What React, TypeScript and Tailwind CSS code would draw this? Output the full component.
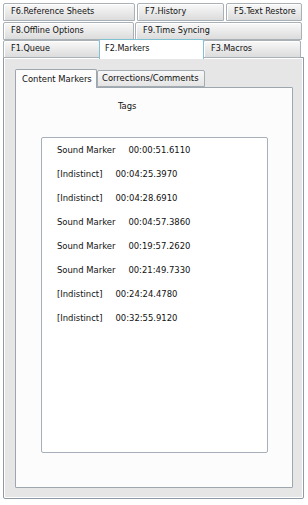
import React from "react";

const font = { fontFamily: '"DejaVu Sans Condensed", "DejaVu Sans", sans-serif' };

function Tab({ w, label, cls = "" }: { w: string; label: string; cls?: string }) {
  return (
    <div
      className={`${w} ${cls} h-[18px] shrink-0 flex items-center pl-[7px] border border-[#a9b0b6] rounded-t-[2px] bg-gradient-to-b from-[#f9f9f9] to-[#dcdcdc] shadow-[inset_1px_1px_0_#ffffff] text-[9px] text-[#111] whitespace-nowrap overflow-hidden`}
    >
      {label}
    </div>
  );
}

const items: [string, string][] = [
  ["Sound Marker", "00:00:51.6110"],
  ["[Indistinct]", "00:04:25.3970"],
  ["[Indistinct]", "00:04:28.6910"],
  ["Sound Marker", "00:04:57.3860"],
  ["Sound Marker", "00:19:57.2620"],
  ["Sound Marker", "00:21:49.7330"],
  ["[Indistinct]", "00:24:24.4780"],
  ["[Indistinct]", "00:32:55.9120"],
];

export default function App() {
  return (
    <div className="w-[308px] h-[505px] bg-white pt-[3px] pl-[3px] text-[#111]" style={font}>
      <div className="flex gap-[2px]">
        <Tab w="w-[132px]" label="F6.Reference Sheets" />
        <Tab w="w-[87px]" label="F7.History" />
        <Tab w="w-[76px]" label="F5.Text Restore" />
      </div>
      <div className="flex gap-[1px] mt-[1px]">
        <Tab w="w-[131px]" label="F8.Offline Options" />
        <Tab w="w-[167px]" label="F9.Time Syncing" />
      </div>
      <div className="flex items-end h-[19px] mt-[-2px]">
        <Tab w="w-[97px]" label="F1.Queue" cls="mb-[-1px]" />
        <div className="relative z-10 w-[105px] h-[20px] mb-[-2px] ml-[-1px] bg-white border border-b-0 border-[#7fc3d3] rounded-t-[2px] flex items-start pt-[2px] pl-[5px] text-[9px] text-[#111] whitespace-nowrap">
          F2.Markers
        </div>
        <Tab w="w-[98px]" label="F3.Macros" cls="mb-[-1px] ml-[-1px]" />
      </div>
      <div className="w-[301px] h-[442px] border border-[#8e9aa5] rounded-b-[2px] bg-white p-[1px]">
        <div className="w-full h-full bg-[#e6e6e6] pt-[10px] pl-[10px] pr-[9px] pb-[9px] flex flex-col">
          <div className="flex items-end h-[18px]">
            <div className="relative z-10 w-[82px] h-[19px] mb-[-1px] bg-[#fcfcfc] border border-b-0 border-[#9ea6ae] rounded-t-[2px] flex items-start pt-[2px] pl-[6px] text-[9.4px] whitespace-nowrap">
              Content Markers
            </div>
            <div className="w-[108px] h-[17px] bg-gradient-to-b from-[#f8f8f8] to-[#e4e4e4] border border-[#a3abb3] rounded-t-[2px] flex items-center pl-[4px] text-[9.4px] whitespace-nowrap">
              Corrections/Comments
            </div>
          </div>
          <div className="flex-1 bg-[#fcfcfc] border border-[#9ea6ae] rounded-[1px] flex flex-col">
            <div className="h-[49px] pl-[102px] pt-[11px] text-[9.4px]">Tags</div>
            <div className="ml-[25px] w-[227px] h-[316px] bg-white border border-[#a7b0b9] rounded-[2px] pl-[15px] flex flex-col">
              {items.map(([a, b], i) => (
                <div key={i} className="h-[24px] flex items-center gap-[13px] text-[9.4px] whitespace-nowrap">
                  <span>{a}</span>
                  <span>{b}</span>
                </div>
              ))}
            </div>
          </div>
        </div>
      </div>
    </div>
  );
}
